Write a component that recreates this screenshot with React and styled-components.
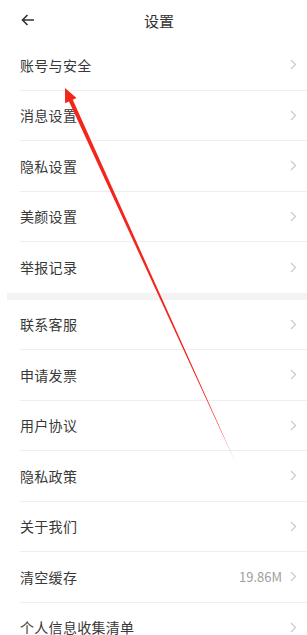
import React from "react";
import styled, { createGlobalStyle } from "styled-components";

const GlobalStyle = createGlobalStyle`
  html, body {
    margin: 0;
    padding: 0;
    background: #ffffff;
    font-family: "Noto Sans CJK SC", "Noto Sans", sans-serif;
  }
`;

const Page = styled.div`
  position: relative;
  width: 307px;
  height: 635px;
  overflow: hidden;
  background: #fff;
`;

const Header = styled.div`
  height: 40px;
  display: flex;
  align-items: center;
  justify-content: center;
  position: relative;
`;

const Back = styled.div`
  position: absolute;
  left: 20px;
  top: 13px;
  width: 16px;
  height: 14px;
  display: flex;
`;

const Title = styled.h1`
  margin: 0;
  font-size: 15px;
  font-weight: 400;
  color: #333;
  padding-left: 11px;
`;

const Group = styled.div`
  display: flex;
  flex-direction: column;
`;

const Row = styled.div`
  height: 50.5px;
  box-sizing: border-box;
  margin-left: 20px;
  padding-right: 10px;
  display: flex;
  align-items: center;
  border-bottom: ${(p) => (p.$last ? "none" : "1px solid #eeeeee")};
`;

const Label = styled.span`
  flex: 1;
  font-size: 14px;
  color: #383838;
  letter-spacing: 0.3px;
`;

const Value = styled.span`
  font-size: 13px;
  color: #a0a0a0;
  margin-right: 8px;
`;

const Band = styled.div`
  height: 7px;
  margin-left: 7px;
  background: #f3f3f3;
`;

const Overlay = styled.svg`
  position: absolute;
  left: 0;
  top: 0;
  pointer-events: none;
`;

const Chevron = () => (
  <svg width="7" height="11" viewBox="0 0 7 11">
    <path d="M1 1l4.5 4.5L1 10" fill="none" stroke="#cccccc" strokeWidth="1.3" />
  </svg>
);

const group1 = ["账号与安全", "消息设置", "隐私设置", "美颜设置", "举报记录"];
const group2 = [
  { label: "联系客服" },
  { label: "申请发票" },
  { label: "用户协议" },
  { label: "隐私政策" },
  { label: "关于我们" },
  { label: "清空缓存", value: "19.86M" },
  { label: "个人信息收集清单" },
];

export default function App() {
  return (
    <Page>
      <GlobalStyle />
      <Header>
        <Back>
          <svg width="16" height="14" viewBox="0 0 16 14">
            <path d="M14 7H2.5M7.5 2L2.5 7l5 5" fill="none" stroke="#333" strokeWidth="1.6" />
          </svg>
        </Back>
        <Title>设置</Title>
      </Header>
      <Group>
        {group1.map((t, i) => (
          <Row key={t} $last={i === group1.length - 1}>
            <Label>{t}</Label>
            <Chevron />
          </Row>
        ))}
      </Group>
      <Band />
      <Group>
        {group2.map((r) => (
          <Row key={r.label}>
            <Label>{r.label}</Label>
            {r.value && <Value>{r.value}</Value>}
            <Chevron />
          </Row>
        ))}
      </Group>
      <Overlay width="307" height="635" viewBox="0 0 307 635">
        <defs>
          <linearGradient id="fade" x1="65" y1="88" x2="238" y2="468" gradientUnits="userSpaceOnUse">
            <stop offset="0" stopColor="#f3261b" />
            <stop offset="0.9" stopColor="#f3261b" />
            <stop offset="1" stopColor="#f3261b" stopOpacity="0.25" />
          </linearGradient>
        </defs>
        <polygon
          points="65,88 76.5,98.1 72.8,99.8 238,468 69.0,101.6 65.1,103.3"
          fill="url(#fade)"
        />
      </Overlay>
    </Page>
  );
}
